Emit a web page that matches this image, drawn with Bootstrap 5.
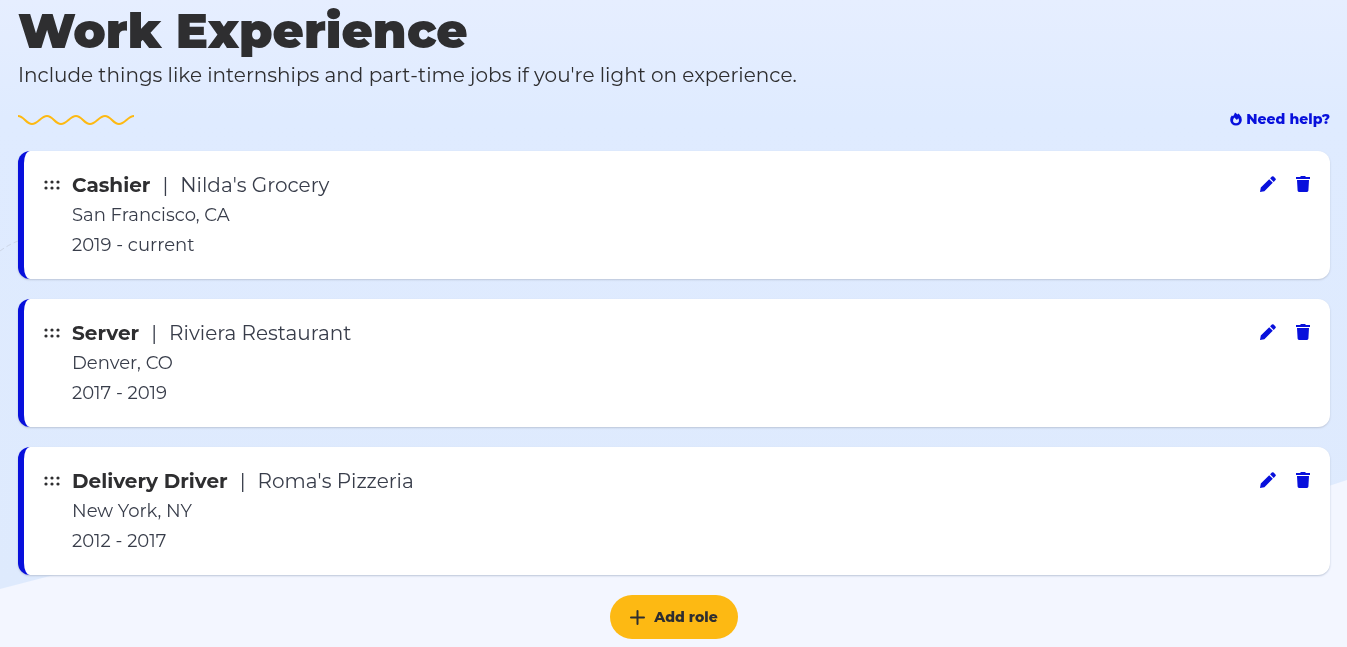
<!DOCTYPE html>
<html lang="en">
<head>
<meta charset="utf-8">
<meta name="viewport" content="width=device-width, initial-scale=1">
<title>Work Experience</title>
<link href="https://cdn.jsdelivr.net/npm/bootstrap@5.3.0/dist/css/bootstrap.min.css" rel="stylesheet">
<style>
  :root { --brand: #0810dc; --ink: #2e2e30; --ink-soft: #383d4a; --gold: #fdb913; }
  body { font-family: Montserrat, Inter, "Open Sans", sans-serif; color: var(--ink); background: #f3f6ff; min-height: 100vh; }
  .backdrop { z-index: -1; }
  main { padding: 0 17px 8px 18px; }
  h1 { font-size: 48px; font-weight: 900; line-height: 62px; }
  .intro { font-size: 20px; font-weight: 400; line-height: 26px; }
  .tools { height: 28px; margin: 18px 0 17px; }
  .help { font-size: 14px; font-weight: 800; color: var(--brand); gap: 4px; padding-bottom: 2px; }
  .roles { gap: 20px; }
  .role { border: 0; border-left: 6px solid var(--brand); border-radius: 12px; padding: 19px 20px; box-shadow: 0 1px 2px #bcc5d8; }
  .role-text { font-size: 18px; line-height: 30px; font-weight: 400; color: var(--ink-soft); margin-left: 12px; }
  .role-text h2 { font-size: 20px; line-height: 30px; font-weight: 400; }
  .role-text strong { font-weight: 700; color: var(--ink); }
  .divider { margin: 0 12px; }
  .grip { height: 30px; cursor: grab; }
  .role-actions { gap: 20px; height: 28px; }
  .role-actions .btn { color: var(--brand); }
  .add { background: var(--gold); color: var(--ink); font-size: 14px; font-weight: 800; height: 44px; padding: 0 20px; gap: 9px; }
</style>
</head>
<body>
<svg class="backdrop position-fixed top-0 start-0 w-100 h-100" viewBox="0 0 1347 647" preserveAspectRatio="none" aria-hidden="true">
  <defs><linearGradient id="sky" x1="0" y1="0" x2="0" y2="1"><stop offset="0" stop-color="#e6eeff"/><stop offset=".2" stop-color="#dfebff"/><stop offset="1" stop-color="#deeafd"/></linearGradient></defs>
  <path d="M0 0H1347V480Q1200 530 1000 550T300 548Q150 552 50 576L0 589Z" fill="url(#sky)"/>
  <path d="M0 251Q8 245 18 241" fill="none" stroke="#cdd6e6" stroke-dasharray="5 3"/>
</svg>
<svg class="d-none" aria-hidden="true">
  <symbol id="grip" viewBox="0 0 16 10"><g fill="#2e2e30"><circle cx="2" cy="2" r="1.600"/><circle cx="8" cy="2" r="1.600"/><circle cx="14" cy="2" r="1.600"/><circle cx="2" cy="8" r="1.600"/><circle cx="8" cy="8" r="1.600"/><circle cx="14" cy="8" r="1.600"/></g></symbol>
  <symbol id="pencil" viewBox="0 0 16 16"><path fill="currentColor" d="M0 16L.8 11.600 9.200 3.200 12.800 6.800 4.400 15.200ZM10.100 2.300L11.900.5Q12.800-.2 13.600.5L15.500 2.400Q16.200 3.200 15.500 4.100L13.700 5.900Z"/></symbol>
  <symbol id="trash" viewBox="0 0 14 16"><path fill="currentColor" d="M0 1H4L5 0H9L10 1H14V3H0ZM1 4H13L12.400 14.600Q12.300 16 11 16H3Q1.700 16 1.600 14.600Z"/></symbol>
</svg>
<main>
  <header>
    <h1 class="m-0">Work Experience</h1>
    <p class="intro m-0">Include things like internships and part-time jobs if you're light on experience.</p>
    <div class="tools d-flex justify-content-between align-items-center">
      <svg width="116" height="12" viewBox="0 0 116 12" fill="none" stroke="#fdb913" stroke-width="2" aria-hidden="true"><path d="M0 2C6 2 8 10 14 10S23 2 29 2 37 10 43 10 52 2 58 2 66 10 72 10 81 2 87 2 95 10 101 10 110 2 116 2"/></svg>
      <a href="#" class="help d-flex align-items-center text-decoration-none">
        <svg width="12" height="14" viewBox="0 0 13 14" aria-hidden="true"><path fill="currentColor" fill-rule="evenodd" d="M5.400 0Q7 1 8 2.200L9.400 1Q13 4.500 12.800 8.200A6.300 5.800 0 0 1 .2 8.200Q.1 5 2 3.200L3.300 4Q5 2 5.400 0ZM4.600 5.500Q3.200 7.500 3.300 9A3.200 2.600 0 0 0 9.700 9Q9.900 7.500 8.900 6.200L7.500 8Z"/></svg>
        Need help?</a>
    </div>
  </header>
  <section class="roles d-flex flex-column" aria-label="Roles">
    <article class="role card flex-row align-items-start">
      <span class="grip d-flex align-items-center"><svg width="16" height="10" aria-hidden="true"><use href="#grip"/></svg></span>
      <div class="role-text flex-grow-1"><h2 class="m-0 d-flex"><strong>Cashier</strong><span class="divider">|</span>Nilda's Grocery</h2><div>San Francisco, CA</div><div>2019 - current</div></div>
      <div class="role-actions d-flex align-items-center">
        <button type="button" class="btn p-0 border-0 d-flex" aria-label="Edit Cashier"><svg width="16" height="16" aria-hidden="true"><use href="#pencil"/></svg></button>
        <button type="button" class="btn p-0 border-0 d-flex" aria-label="Delete Cashier"><svg width="14" height="16" aria-hidden="true"><use href="#trash"/></svg></button>
      </div>
    </article>
    <article class="role card flex-row align-items-start">
      <span class="grip d-flex align-items-center"><svg width="16" height="10" aria-hidden="true"><use href="#grip"/></svg></span>
      <div class="role-text flex-grow-1"><h2 class="m-0 d-flex"><strong>Server</strong><span class="divider">|</span>Riviera Restaurant</h2><div>Denver, CO</div><div>2017 - 2019</div></div>
      <div class="role-actions d-flex align-items-center">
        <button type="button" class="btn p-0 border-0 d-flex" aria-label="Edit Server"><svg width="16" height="16" aria-hidden="true"><use href="#pencil"/></svg></button>
        <button type="button" class="btn p-0 border-0 d-flex" aria-label="Delete Server"><svg width="14" height="16" aria-hidden="true"><use href="#trash"/></svg></button>
      </div>
    </article>
    <article class="role card flex-row align-items-start">
      <span class="grip d-flex align-items-center"><svg width="16" height="10" aria-hidden="true"><use href="#grip"/></svg></span>
      <div class="role-text flex-grow-1"><h2 class="m-0 d-flex"><strong>Delivery Driver</strong><span class="divider">|</span>Roma's Pizzeria</h2><div>New York, NY</div><div>2012 - 2017</div></div>
      <div class="role-actions d-flex align-items-center">
        <button type="button" class="btn p-0 border-0 d-flex" aria-label="Edit Delivery Driver"><svg width="16" height="16" aria-hidden="true"><use href="#pencil"/></svg></button>
        <button type="button" class="btn p-0 border-0 d-flex" aria-label="Delete Delivery Driver"><svg width="14" height="16" aria-hidden="true"><use href="#trash"/></svg></button>
      </div>
    </article>
  </section>
  <div class="d-flex justify-content-center mt-3 pt-1">
    <button type="button" class="add btn border-0 rounded-pill d-flex align-items-center"><svg width="15" height="15" viewBox="0 0 15 15" stroke="currentColor" stroke-width="2" stroke-linecap="round" aria-hidden="true"><path d="M7.500 1V14M1 7.500H14"/></svg>Add role</button>
  </div>
</main>
<script src="https://cdn.jsdelivr.net/npm/bootstrap@5.3.0/dist/js/bootstrap.bundle.min.js"></script>
</body>
</html>
